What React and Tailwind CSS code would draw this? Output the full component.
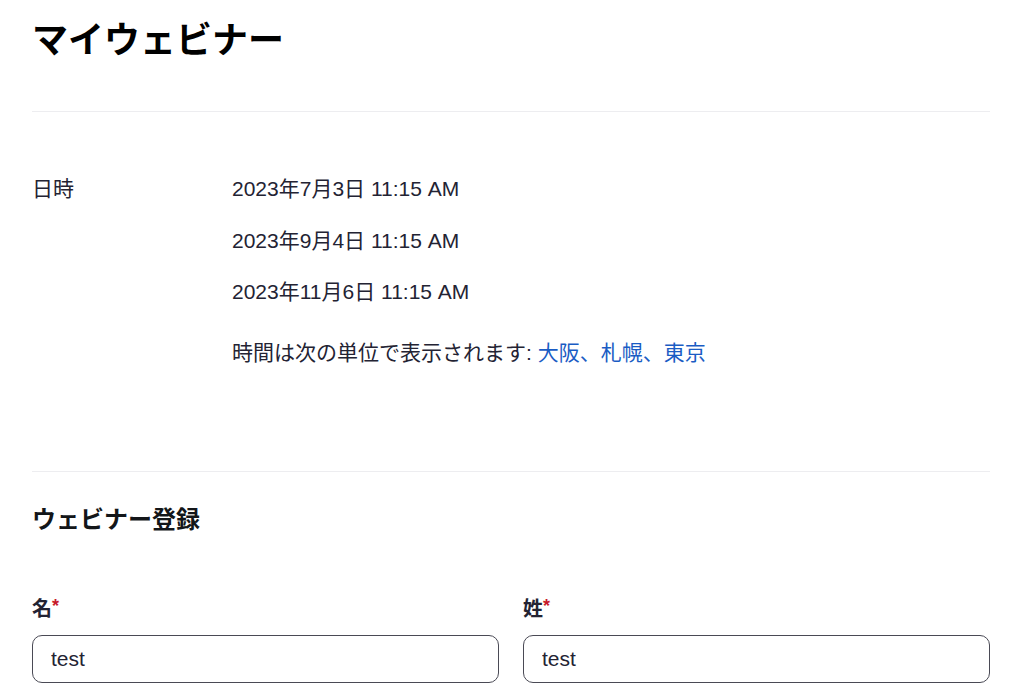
import React from "react";

const font = {
  fontFamily: '"Liberation Sans", Arial, "Noto Sans CJK JP", sans-serif',
};

const dates = ["2023年7月3日 11:15 AM", "2023年9月4日 11:15 AM", "2023年11月6日 11:15 AM"];

const Field = ({ label, value }) => (
  <div className="flex-1 flex flex-col">
    <label className="text-[20px] font-bold text-[#232333] leading-[28px] mb-[12px]">
      {label}
      <span className="text-[#c7192a] text-[18px] align-top leading-[22px]">*</span>
    </label>
    <input
      defaultValue={value}
      className="h-[48px] w-full rounded-[10px] border border-[#4a4a55] px-[18px] text-[21px] text-[#232333] outline-none"
    />
  </div>
);

export default function App() {
  return (
    <div className="min-h-screen bg-white px-[32px] text-[#232333]" style={font}>
      <div className="w-[958px]">
        <h1 className="pt-[18px] pb-[47px] text-[36px] font-bold leading-[46px] text-black">
          マイウェビナー
        </h1>
        <div className="border-t border-[#ededf0]" />

        <div className="flex pt-[63px] pb-[104px]">
          <div className="w-[200px] text-[21px] leading-[28px]">日時</div>
          <div className="flex flex-col text-[21px] leading-[28px]">
            {dates.map((d) => (
              <div key={d} className="mb-[23.5px]">{d}</div>
            ))}
            <div className="mt-[9.5px]">
              時間は次の単位で表示されます:{" "}
              <a href="#" className="text-[#1a5cc4]">大阪、札幌、東京</a>
            </div>
          </div>
        </div>

        <div className="border-t border-[#ededf0]" />

        <h2 className="pt-[32px] text-[24px] font-bold leading-[32px] text-[#131619]">
          ウェビナー登録
        </h2>

        <div className="flex gap-[24px] pt-[59px]">
          <Field label="名" value="test" />
          <Field label="姓" value="test" />
        </div>
      </div>
    </div>
  );
}
